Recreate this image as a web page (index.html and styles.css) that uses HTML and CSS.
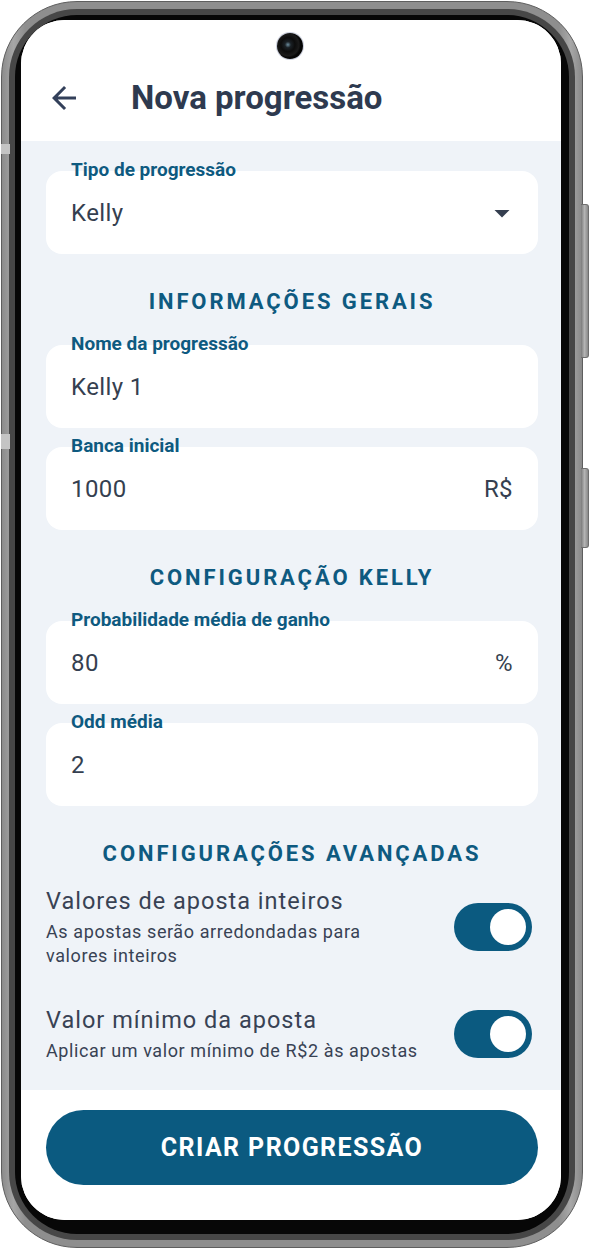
FILE: index.html
```html
<!DOCTYPE html>
<html lang="pt-BR">
<head>
<meta charset="utf-8">
<title>Nova progressão</title>
<link rel="stylesheet" href="styles.css">
</head>
<body>
<div class="device">
  <div class="side-btn side-btn-power"></div>
  <div class="side-btn side-btn-volume"></div>
  <div class="band band-top"></div>
  <div class="band band-mid"></div>
  <div class="phone">
    <div class="bezel-mid">
      <div class="bezel">
        <div class="screen">
          <div class="camera"></div>
          <header class="appbar">
            <span class="back">
              <svg viewBox="0 0 24 24" width="36" height="36"><path d="M20 11H7.83l5.59-5.59L12 4l-8 8 8 8 1.41-1.41L7.83 13H20v-2z" fill="#33405a"/></svg>
            </span>
            <h1 class="title">Nova progressão</h1>
          </header>
          <main class="content">
            <div class="field field-first">
              <div class="field-label">Tipo de progressão</div>
              <div class="field-box">
                <span class="field-value">Kelly</span>
                <svg class="dropdown" viewBox="0 0 24 24" width="36" height="36"><path d="M7 10l5 5 5-5z" fill="#343e4f"/></svg>
              </div>
            </div>

            <h2 class="section">INFORMAÇÕES GERAIS</h2>

            <div class="field">
              <div class="field-label">Nome da progressão</div>
              <div class="field-box"><span class="field-value">Kelly 1</span></div>
            </div>
            <div class="field field-next">
              <div class="field-label">Banca inicial</div>
              <div class="field-box"><span class="field-value">1000</span><span class="suffix">R$</span></div>
            </div>

            <h2 class="section">CONFIGURAÇÃO KELLY</h2>

            <div class="field">
              <div class="field-label">Probabilidade média de ganho</div>
              <div class="field-box"><span class="field-value">80</span><span class="suffix">%</span></div>
            </div>
            <div class="field field-next">
              <div class="field-label">Odd média</div>
              <div class="field-box"><span class="field-value">2</span></div>
            </div>

            <h2 class="section">CONFIGURAÇÕES AVANÇADAS</h2>

            <div class="switch-row">
              <div class="switch-text">
                <div class="switch-title">Valores de aposta inteiros</div>
                <div class="switch-sub">As apostas serão arredondadas para valores inteiros</div>
              </div>
              <span class="toggle"><span class="knob"></span></span>
            </div>
            <div class="switch-row switch-row-next">
              <div class="switch-text">
                <div class="switch-title">Valor mínimo da aposta</div>
                <div class="switch-sub">Aplicar um valor mínimo de R$2 às apostas</div>
              </div>
              <span class="toggle"><span class="knob"></span></span>
            </div>
          </main>
          <footer class="bottom">
            <button class="cta">CRIAR PROGRESSÃO</button>
          </footer>
        </div>
      </div>
    </div>
  </div>
</div>
</body>
</html>
```
FILE: styles.css
```css
* { box-sizing: border-box; }

html, body {
  margin: 0;
  padding: 0;
  background: #ffffff;
}

body {
  font-family: Roboto, "Noto Sans", "Liberation Sans", sans-serif;
}

.device {
  position: relative;
  width: 590px;
  height: 1250px;
}

.side-btn {
  position: absolute;
  left: 581px;
  width: 8px;
  border-radius: 0 3px 3px 0;
  background: linear-gradient(90deg, #7a7a7a, #b4b4b4 50%, #8a8a8a);
  border: 1px solid #6e6e6e;
  border-left: none;
}
.side-btn-power { top: 203px; height: 154px; }
.side-btn-volume { top: 467px; height: 80px; }

.band {
  position: absolute;
  left: 1px;
  width: 9px;
  background: #c4c4c4;
  z-index: 2;
}
.band-top { top: 143px; height: 10px; }
.band-mid { top: 433px; height: 15px; }

.phone {
  margin: 1px 0 0 1px;
  width: 582px;
  height: 1247px;
  border-radius: 76px;
  border: 1px solid #5e5e5e;
  padding: 7px;
  background: linear-gradient(90deg, #8c8c8c 0%, #a6a6a6 2%, #8e8e8e 4%, #8e8e8e 96%, #a8a8a8 98%, #8a8a8a 100%);
}

.bezel-mid {
  height: 100%;
  border-radius: 68px;
  padding: 6px;
  background: #474747;
}

.bezel {
  height: 100%;
  border-radius: 62px;
  padding: 5px 8px 14px 6px;
  background: #070707;
}

.screen {
  position: relative;
  width: 540px;
  height: 1200px;
  border-radius: 44px;
  overflow: hidden;
  background: #ffffff;
  display: flex;
  flex-direction: column;
}

.camera {
  position: absolute;
  left: 256px;
  top: 13px;
  width: 26px;
  height: 26px;
  border-radius: 50%;
  background: radial-gradient(circle at 42% 45%, #6e8fa0 0, #1b2126 3px, #0c0c0c 7px, #1a1a1a 11px, #050505 13px);
  box-shadow: 0 0 0 1px rgba(40, 60, 120, 0.25);
}

.appbar {
  flex: none;
  height: 121px;
  padding: 58px 0 0 25px;
  display: flex;
  align-items: flex-start;
  background: #ffffff;
}

.back {
  width: 36px;
  height: 40px;
  display: flex;
  align-items: center;
  justify-content: center;
}
.back svg { display: block; }

.title {
  margin: 0 0 0 49px;
  height: 40px;
  line-height: 40px;
  font-size: 33px;
  font-weight: 700;
  color: #2e3a4f;
  letter-spacing: 0;
}

.content {
  flex: none;
  height: 949px;
  background: #eff3f8;
  padding: 19px 23px 0 25px;
  display: flex;
  flex-direction: column;
}

.field {
  display: flex;
  flex-direction: column;
  margin-top: 17px;
}
.field-first { margin-top: 0; }
.field-next { margin-top: 8px; }

.field-label {
  position: relative;
  z-index: 1;
  height: 20px;
  line-height: 20px;
  margin: 0 0 -9px 25px;
  font-size: 19px;
  font-weight: 700;
  color: #0e5a80;
}

.field-box {
  height: 83px;
  background: #ffffff;
  border-radius: 16px;
  padding: 0 25px;
  display: flex;
  align-items: center;
  justify-content: space-between;
}

.field-value,
.suffix {
  font-size: 24px;
  color: #353f50;
  line-height: 30px;
  letter-spacing: 0.4px;
}

.dropdown {
  display: block;
  margin-right: -7px;
}

.section {
  margin: 33px 0 0;
  height: 30px;
  line-height: 30px;
  text-align: center;
  font-size: 22px;
  font-weight: 700;
  letter-spacing: 2.9px;
  color: #0e5a80;
}

.switch-row {
  margin-top: 17px;
  display: flex;
  align-items: center;
  justify-content: space-between;
}
.switch-row-next { margin-top: 37px; }

.switch-text {
  max-width: 378px;
}

.switch-title {
  font-size: 23.5px;
  line-height: 30px;
  color: #384254;
  letter-spacing: 1px;
}

.switch-sub {
  margin-top: 4px;
  font-size: 18px;
  line-height: 24px;
  color: #384254;
  letter-spacing: 0.6px;
}

.toggle {
  flex: none;
  width: 78px;
  height: 48px;
  border-radius: 24px;
  background: #0b5a80;
  padding: 6px;
  display: flex;
  justify-content: flex-end;
  margin-right: 6px;
}

.knob {
  width: 36px;
  height: 36px;
  border-radius: 50%;
  background: #ffffff;
}

.bottom {
  flex: 1;
  background: #ffffff;
  padding: 20px 23px 0 25px;
}

.cta {
  width: 100%;
  height: 75px;
  border: none;
  border-radius: 38px;
  background: #0b5a80;
  color: #ffffff;
  font-family: Roboto, "Noto Sans", "Liberation Sans", sans-serif;
  font-size: 25px;
  font-weight: 700;
  letter-spacing: 1.4px;
  cursor: pointer;
}
```
